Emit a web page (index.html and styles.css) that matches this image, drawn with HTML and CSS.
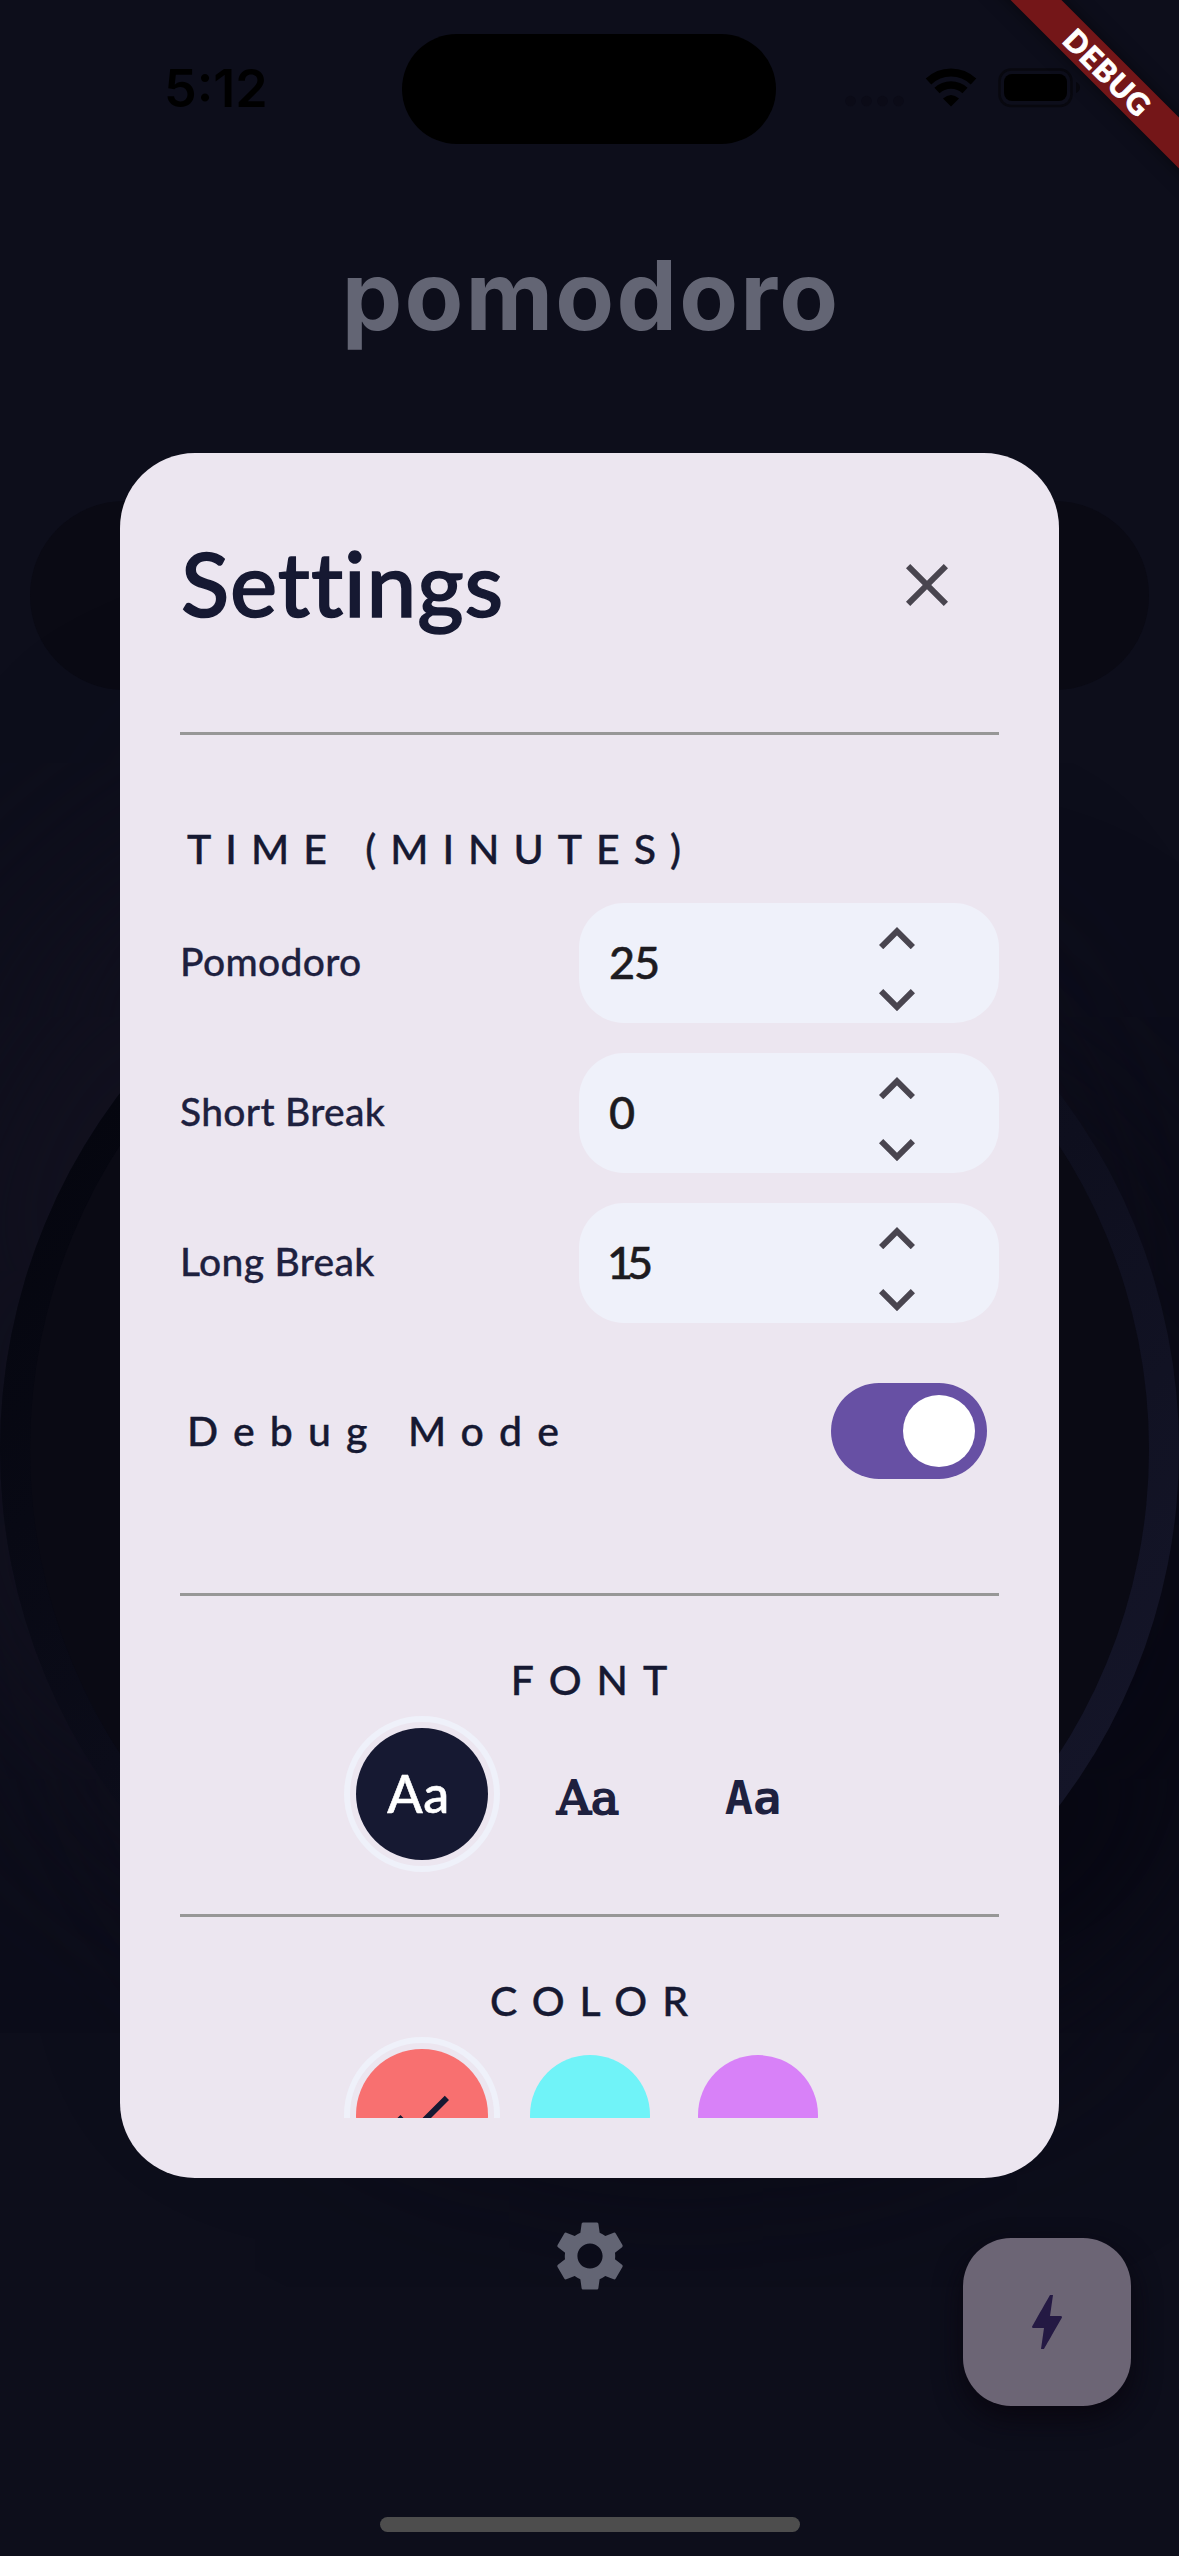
FILE: index.html
```html
<!DOCTYPE html>
<html lang="en">
<head>
<meta charset="utf-8">
<title>Pomodoro</title>
<link rel="stylesheet" href="styles.css">
</head>
<body>
<div class="screen">
  <div class="page">
    <div class="status">
      <div class="time">5:12</div>
      <div class="island"></div>
      <svg class="indicators" width="236" height="40" viewBox="0 0 236 40">
        <g fill="#0b0b17"><circle cx="5.500" cy="33" r="5.300"/><circle cx="21.500" cy="33" r="5.300"/><circle cx="37.500" cy="33" r="5.300"/><circle cx="53.500" cy="33" r="5.300"/></g>
        <g fill="none" stroke="#000">
          <path d="M83.500 13.500A32.500 32.500 0 0 1 128.500 13.500" stroke-width="8"/>
          <path d="M92 22.500A20.500 20.500 0 0 1 120 22.500" stroke-width="7.500"/>
        </g>
        <path d="M98 30.500Q106 23.500 114 30.500L106 38.500Z"/>
        <rect x="154.500" y="1.500" width="72" height="36.500" rx="11.500" fill="none" stroke="#08080f" stroke-width="2.500"/>
        <rect x="159" y="6" width="63" height="27" rx="8"/>
        <path d="M231 14q4 2 4 5.500t-4 5.500z" fill="#08080f"/>
      </svg>
    </div>
    <h1 class="brand">pomodoro</h1>
    <div class="tabs"></div>
    <div class="timer"><div class="dial"></div></div>
    <svg class="gear" viewBox="0 0 24 24"><path d="M19.140 12.940c.040-.300.060-.610.060-.940 0-.320-.020-.640-.070-.940l2.030-1.580c.180-.140.230-.410.120-.610l-1.920-3.320c-.120-.220-.370-.290-.590-.220l-2.390.960c-.500-.380-1.030-.700-1.620-.940l-.360-2.540c-.040-.240-.240-.410-.480-.410h-3.840c-.240 0-.430.170-.470.410l-.360 2.540c-.590.240-1.130.570-1.620.940l-2.390-.960c-.220-.080-.470 0-.590.220L2.740 8.870c-.120.210-.080.470.120.610l2.030 1.580c-.050.300-.090.630-.090.940s.020.640.070.940l-2.030 1.580c-.180.140-.230.410-.120.610l1.920 3.320c.120.220.370.290.590.220l2.390-.960c.500.380 1.030.700 1.620.940l.360 2.540c.050.240.240.410.480.410h3.840c.240 0 .440-.170.470-.410l.360-2.540c.590-.240 1.130-.560 1.620-.940l2.390.960c.220.080.470 0 .590-.220l1.920-3.320c.120-.220.070-.470-.120-.610l-2.010-1.580zM12 15.600c-1.980 0-3.600-1.620-3.600-3.600s1.620-3.600 3.600-3.600 3.600 1.620 3.600 3.600-1.620 3.600-3.600 3.600z"/></svg>
  </div>
  <div class="fab"><svg viewBox="0 0 24 24"><path d="M11 21h-1l1-7H7.500c-.580 0-.570-.320-.380-.660.190-.340.050-.080.070-.120C8.480 10.940 10.420 7.540 13 3h1l-1 7h3.500c.490 0 .560.330.470.510l-.070.150C12.960 17.550 11 21 11 21z"/></svg></div>
  <div class="home"></div>
  <section class="dialog">
    <div class="content">
      <header class="head">
        <h2>Settings</h2>
        <svg class="close" viewBox="0 0 24 24"><path d="M19 6.410 17.590 5 12 10.590 6.410 5 5 6.410 10.590 12 5 17.590 6.410 19 12 13.410 17.590 19 19 17.590 13.410 12z"/></svg>
      </header>
      <hr>
      <h3 class="label time-label">TIME (MINUTES)</h3>
      <div class="fields">
        <div class="row"><span class="name">Pomodoro</span><div class="field"><span>25</span><div class="steps"><svg viewBox="6 8 12 7.410"><path d="M12 8l-6 6 1.410 1.410L12 10.830l4.590 4.580L18 14z"/></svg><svg viewBox="6 8.590 12 7.410"><path d="M16.590 8.590 12 13.170 7.410 8.590 6 10l6 6 6-6z"/></svg></div></div></div>
        <div class="row"><span class="name">Short Break</span><div class="field"><span>0</span><div class="steps"><svg viewBox="6 8 12 7.410"><path d="M12 8l-6 6 1.410 1.410L12 10.830l4.590 4.580L18 14z"/></svg><svg viewBox="6 8.590 12 7.410"><path d="M16.590 8.590 12 13.170 7.410 8.590 6 10l6 6 6-6z"/></svg></div></div></div>
        <div class="row"><span class="name">Long Break</span><div class="field"><span class="narrow">15</span><div class="steps"><svg viewBox="6 8 12 7.410"><path d="M12 8l-6 6 1.410 1.410L12 10.830l4.590 4.580L18 14z"/></svg><svg viewBox="6 8.590 12 7.410"><path d="M16.590 8.590 12 13.170 7.410 8.590 6 10l6 6 6-6z"/></svg></div></div></div>
      </div>
      <div class="debug"><span class="label debug-label">Debug Mode</span><div class="switch"><i></i></div></div>
      <hr>
      <h3 class="label mid">FONT</h3>
      <div class="options">
        <div class="ring"><div class="disc ink">Aa</div></div>
        <span class="face slab">Aa</span>
        <span class="face mono">Aa</span>
      </div>
      <hr class="third">
      <h3 class="label mid">COLOR</h3>
      <div class="options">
        <div class="ring"><div class="disc red"><svg viewBox="0 0 24 24"><path d="M9 16.170 4.830 12l-1.420 1.410L9 19 21 7l-1.410-1.410z"/></svg></div></div>
        <div class="swatch cyan"></div>
        <div class="swatch purple"></div>
      </div>
    </div>
  </section>
  <div class="banner">DEBUG</div>
</div>
</body>
</html>
```
FILE: styles.css
```css
* { box-sizing: border-box; margin: 0; padding: 0; }
body { background: #0d0e1b; font-family: Lato, "Liberation Sans", sans-serif; font-variant-ligatures: none; }
svg { display: block; flex: none; }
.screen { position: relative; width: 1179px; height: 2556px; overflow: hidden; background: #0d0e1b; }

.page { display: flex; flex-direction: column; align-items: center; }
.status { display: flex; width: 100%; height: 144px; padding: 34px 98px 0 164px; align-items: flex-start; justify-content: space-between; }
.time { width: 238px; padding-top: 25px; font: 600 52px/60px Inter, sans-serif; letter-spacing: 0; color: #000; }
.island { width: 375px; height: 110px; border-radius: 55px; background: #000; }
.indicators { margin: 34px 0 0 69px; }
.brand { margin-top: 81px; height: 140px; padding-left: 3px; font: 700 96px/140px Inter, sans-serif; letter-spacing: 2.200px; color: #636574; }
.tabs { width: 1119px; height: 189px; margin-top: 136px; border-radius: 95px; background: #0a0a14; }
.timer { width: 1179px; height: 1179px; margin-top: 170px; padding: 30px; border-radius: 50%; background: linear-gradient(135deg, #05060f 15%, #141528 85%); box-shadow: -100px -100px 200px #12111f, 100px 100px 200px #080813; }
.dial { height: 1119px; border-radius: 50%; background: #0a0a14; }
.gear { width: 84px; height: 84px; margin-top: 175px; fill: #636574; }

.fab { position: absolute; left: 963px; top: 2238px; width: 168px; height: 168px; padding: 48px; border-radius: 48px; background: #6c6575; box-shadow: 0 12px 28px rgba(9, 5, 14, .9); }
.fab svg { width: 72px; height: 72px; fill: #241943; }
.home { position: absolute; left: 380px; top: 2517px; width: 420px; height: 15px; border-radius: 8px; background: #4d4d4d; }

.dialog { position: absolute; left: 120px; top: 453px; width: 939px; height: 1725px; padding: 60px; border-radius: 75px; background: #ece6f0; }
.content { height: 1605px; overflow: hidden; }
.head { display: flex; align-items: center; justify-content: space-between; height: 144px; padding-right: 36px; }
.head h2 { padding: 0 0 4px 1px; font-size: 89px; line-height: 104px; font-weight: 500; letter-spacing: .9px; color: #161932; -webkit-text-stroke: 1.500px #161932; }
.close { width: 72px; height: 72px; fill: #49454f; }
hr { height: 3px; border: 0; background: #979797; margin-top: 75px; }
.label { font-size: 41px; line-height: 60px; font-weight: 500; color: #161932; letter-spacing: 14px; -webkit-text-stroke: .4px #161932; }
.time-label { margin-top: 84px; padding-left: 7px; }
.debug-label { letter-spacing: 15.100px; }
.fields { display: grid; gap: 30px; margin-top: 24px; }
.row { display: grid; grid-template-columns: 399px 420px; align-items: center; height: 120px; }
.name { font-size: 39px; line-height: 48px; padding-bottom: 4px; font-weight: 500; letter-spacing: .3px; color: #1e213f; -webkit-text-stroke: .3px #1e213f; }
.field { display: flex; justify-content: space-between; height: 120px; padding: 24px 84px 12px 30px; border-radius: 45px; background: #eff1fa; }
.field span { font-size: 45px; line-height: 70px; font-weight: 500; letter-spacing: -1px; color: #1d1b20; -webkit-text-stroke: .5px #1d1b20; }
.field .narrow { letter-spacing: -6px; margin-left: -2px; }
.steps { display: flex; flex-direction: column; justify-content: space-between; }
.steps svg { width: 36px; height: 22.230px; fill: #49454f; }
.debug { display: flex; align-items: center; justify-content: space-between; height: 96px; margin-top: 60px; padding: 0 12px 0 7px; }
.switch { width: 156px; height: 96px; padding: 12px; border-radius: 48px; background: #6750a4; display: flex; justify-content: flex-end; }
.switch i { width: 72px; height: 72px; border-radius: 50%; background: #fff; }
.debug + hr { margin-top: 114px; }
.options + .third { margin-top: 42px; }
.mid { margin-top: 54px; padding-left: 14px; text-align: center; letter-spacing: 15px; }
.options { display: grid; grid-template-columns: repeat(3, 168px); justify-content: center; justify-items: center; align-items: center; height: 156px; margin-top: 6px; }
.ring { width: 156px; height: 156px; border: 6px solid #eff1fa; border-radius: 50%; padding: 6px; }
.disc { width: 132px; height: 132px; border-radius: 50%; display: flex; align-items: center; justify-content: center; }
.ink { background: #161932; color: #fff; font-size: 52px; line-height: 60px; font-weight: 500; padding: 0 6px 2px 0; letter-spacing: .5px; -webkit-text-stroke: .6px #fff; }
.face { font-size: 47px; line-height: 60px; color: #1e213f; }
.slab { padding: 7px 3px 0 0; font-family: "DejaVu Serif", serif; -webkit-text-stroke: 2px #1e213f; }
.mono { padding: 7px 9px 0 0; font-family: "DejaVu Sans Mono", monospace; font-weight: 700; }
.red { background: #f87070; }
.red svg { width: 72px; height: 72px; fill: #161932; }
.swatch { width: 120px; height: 120px; border-radius: 50%; }
.cyan { background: #70f3f8; }
.purple { background: #d881f8; }

.banner { position: absolute; left: 957px; top: 53px; width: 300px; height: 36px; transform: rotate(45deg); background: #741618; box-shadow: 0 0 18px rgba(0, 0, 0, .5); color: #fff; font-size: 30px; line-height: 36px; font-weight: 900; letter-spacing: 1px; text-indent: 3px; text-align: center; -webkit-text-stroke: .8px #fff; }
```
